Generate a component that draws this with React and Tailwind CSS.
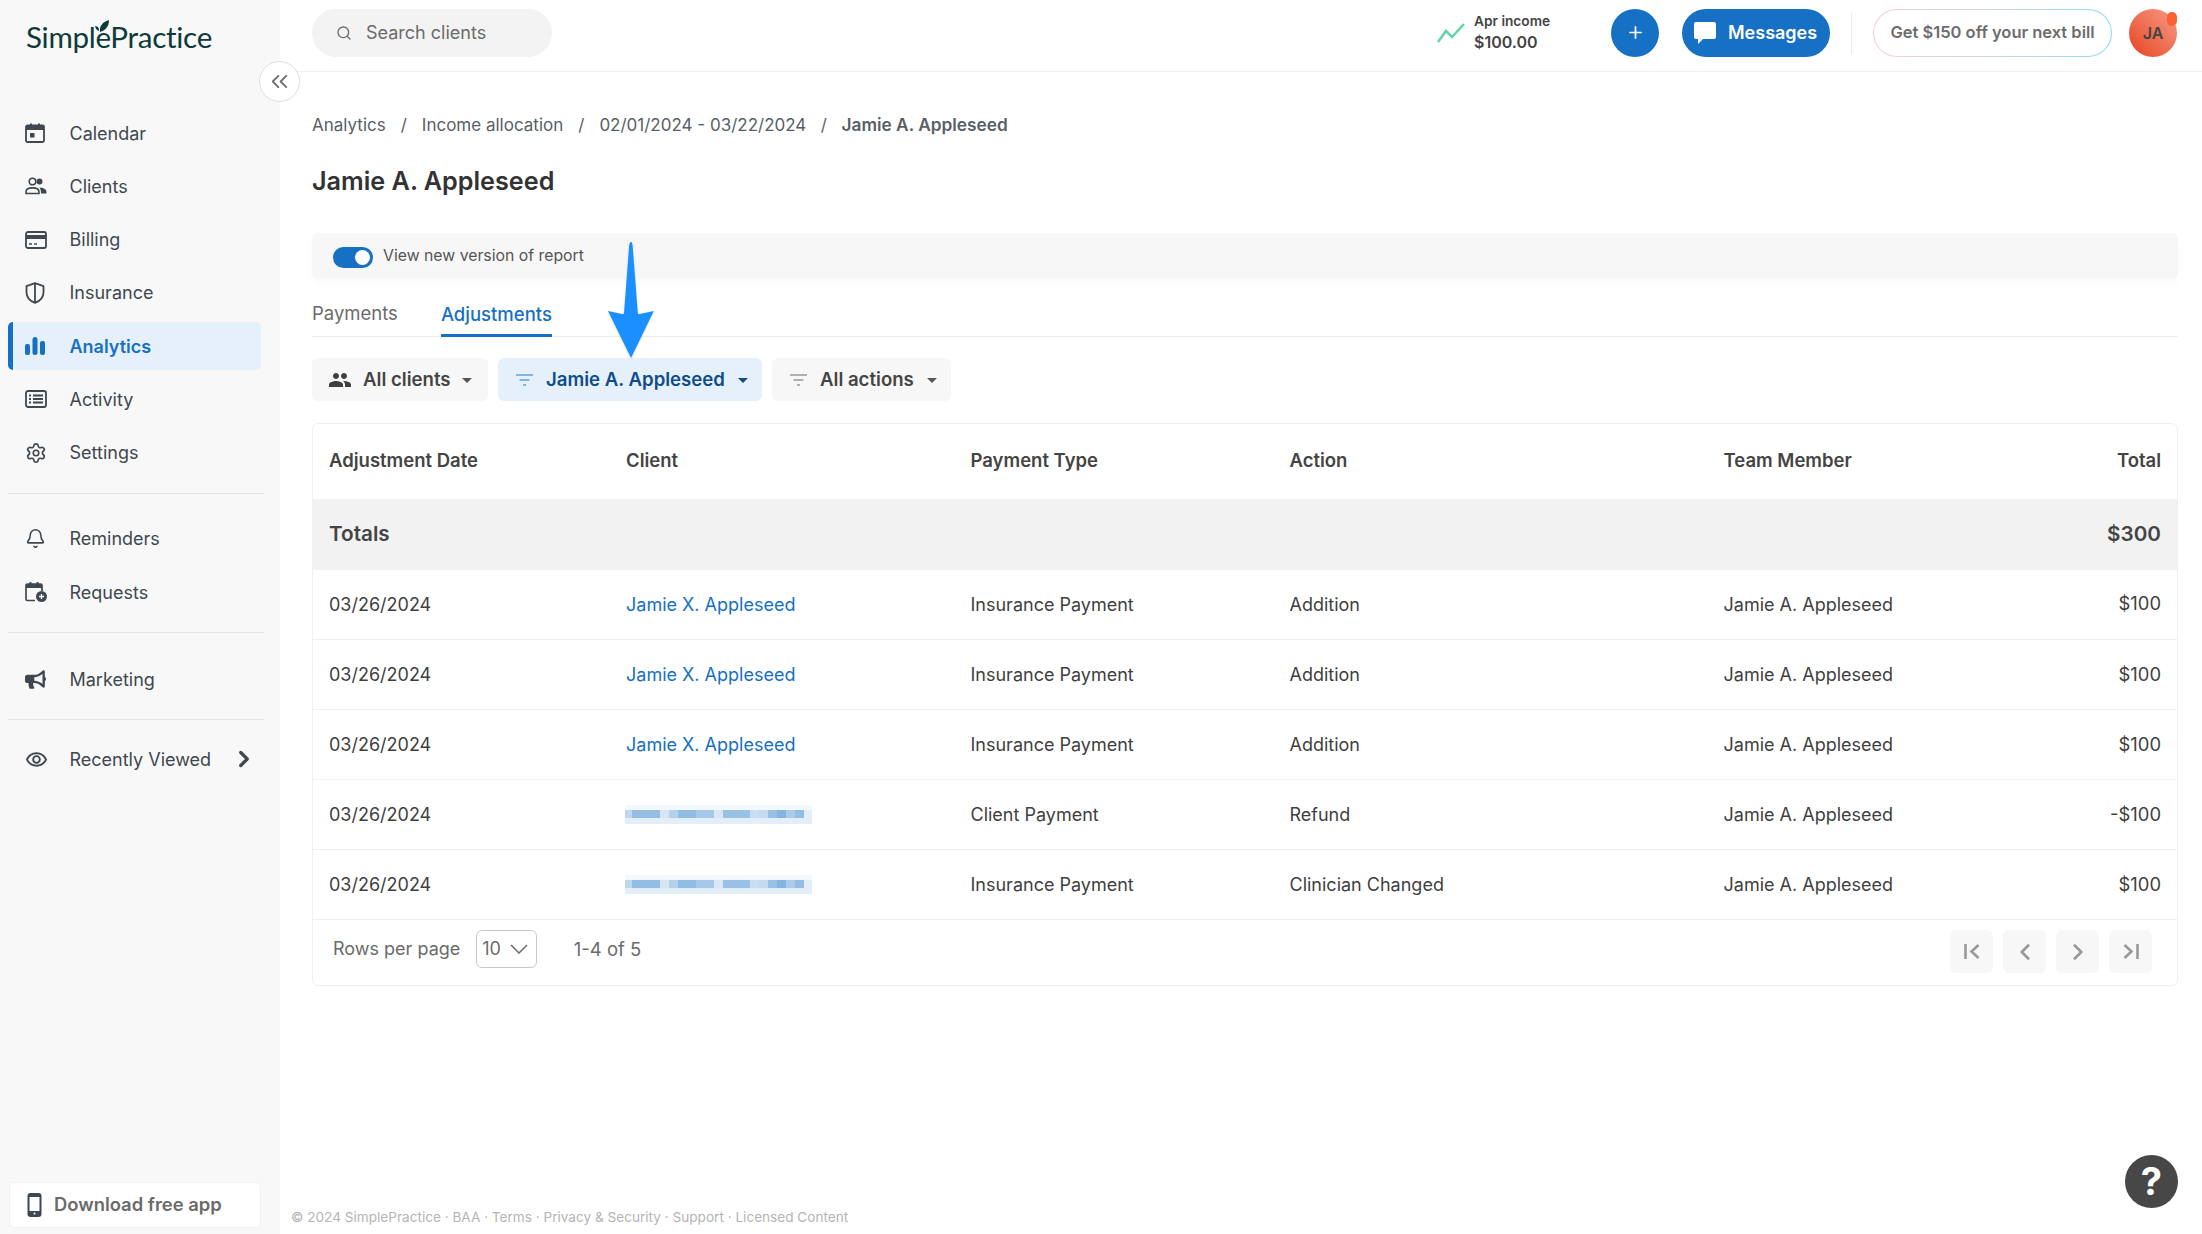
import { Bell, ChevronRight, ChevronLeft, ChevronsLeft, Plus, Search, Settings } from "lucide-react";
import { FaBullhorn } from "react-icons/fa";
import { MdOutlineRemoveRedEye, MdPeople } from "react-icons/md";

const CalendarIcon = () => (
  <svg viewBox="0 0 20 20" className="w-5 h-5" fill="none">
    <path d="M5 0.5h2v2.5H5zM13 0.5h2v2.5h-2z" fill="currentColor" />
    <rect x="1" y="2.5" width="18" height="16.5" rx="1.5" stroke="currentColor" strokeWidth="1.8" />
    <rect x="1" y="2.5" width="18" height="4.5" fill="currentColor" />
    <rect x="5" y="10" width="4.5" height="4.5" fill="currentColor" />
  </svg>
);

const ClientsIcon = () => (
  <svg viewBox="0 0 22 18" className="w-[22px] h-[18px]" fill="none">
    <circle cx="7.5" cy="4.5" r="3.3" stroke="currentColor" strokeWidth="1.6" />
    <path d="M1 16.5v-1.6c0-2.6 3-4 6.5-4s6.5 1.4 6.5 4v1.6z" stroke="currentColor" strokeWidth="1.6" />
    <circle cx="14.500" cy="4.500" r="3" fill="currentColor" />
    <path d="M14.500 10.500c3.500.2 7 1.500 7 4.400v1.600h-5.500c0-2.500-.3-4.400-1.500-6z" fill="currentColor" />
  </svg>
);

const BillingIcon = () => (
  <svg viewBox="0 0 22 18" className="w-[22px] h-[18px]" fill="none">
    <rect x="1" y="1" width="20" height="16" rx="2" stroke="currentColor" strokeWidth="1.8" />
    <rect x="1" y="4" width="20" height="4" fill="currentColor" />
    <path d="M4 13h3M9 13h3" stroke="currentColor" strokeWidth="1.600" />
  </svg>
);

const ShieldIcon = () => (
  <svg viewBox="0 0 20 22" className="w-5 h-[22px]" fill="none" stroke="currentColor" strokeWidth="1.800">
    <path d="M10 1.200 1.500 4.200v6c0 5 3.500 8.800 8.500 10.600 5-1.800 8.500-5.600 8.500-10.600v-6z" strokeLinejoin="round" />
    <path d="M10 1.500v19" />
  </svg>
);

const AnalyticsIcon = () => (
  <svg viewBox="0 0 20 18" className="w-5 h-[18px]" fill="currentColor">
    <rect x="0" y="7" width="5" height="11" rx="2" />
    <rect x="7.500" y="0" width="5" height="18" rx="2.500" />
    <rect x="15" y="4" width="5" height="14" rx="2" />
  </svg>
);

const ActivityIcon = () => (
  <svg viewBox="0 0 22 18" className="w-[22px] h-[18px]" fill="none" stroke="currentColor" strokeWidth="1.800">
    <rect x="1" y="1" width="20" height="16" rx="2" />
    <path d="M4 5.500h2M8 5.500h10M4 9h2M8 9h10M4 12.500h2M8 12.500h10" />
  </svg>
);

const RequestsIcon = () => (
  <svg viewBox="0 0 22 20" className="w-[22px] h-5" fill="none">
    <path d="M4.500 0h2v2.500h-2zM11.500 0h2v2.500h-2z" fill="currentColor" />
    <path d="M10 18.500H2.500A1.500 1.500 0 0 1 1 17V3.500A1.500 1.500 0 0 1 2.500 2h13A1.500 1.500 0 0 1 17 3.500V9" stroke="currentColor" strokeWidth="1.700" />
    <rect x="1" y="2" width="16" height="4" fill="currentColor" />
    <circle cx="16.500" cy="14.500" r="5.500" fill="currentColor" />
    <path d="M16.500 12v5M14 14.500h5" stroke="#f8f8f8" strokeWidth="1.300" />
  </svg>
);

const FilterIcon = ({ className }) => (
  <svg viewBox="0 0 17 12" className={`w-[17px] h-3 ${className}`} fill="none" stroke="currentColor" strokeWidth="1.500">
    <path d="M0 1h17M3.500 6h10M7 11h3" />
  </svg>
);

const Caret = ({ className }) => (
  <svg viewBox="0 0 10 5" className={`w-2.5 h-[5px] ${className}`} fill="currentColor">
    <path d="M0 0h10L5 5z" />
  </svg>
);

const PageFirst = () => (
  <svg viewBox="0 0 16 15" className="w-4 h-[15px]" fill="none" stroke="#999" strokeWidth="2.600">
    <path d="M1.500 0v15M14.500 1 7.500 7.500 14.500 14" />
  </svg>
);

const PageLast = () => (
  <svg viewBox="0 0 16 15" className="w-4 h-[15px]" fill="none" stroke="#999" strokeWidth="2.600">
    <path d="M14.500 0v15M1.500 1 8.500 7.500 1.500 14" />
  </svg>
);

// the blurred client names in the last two rows
const blurCells = [
  [0, 7, 0.28], [7, 28, 0.46], [35, 9, 0.18], [44, 9, 0.32], [53, 18, 0.47], [71, 18, 0.38],
  [89, 9, 0.16], [98, 27, 0.44], [125, 9, 0.24], [134, 9, 0.26], [143, 9, 0.44], [152, 9, 0.52],
  [161, 9, 0.36], [170, 9, 0.46], [179, 8, 0.12],
];

const BlurredName = () => (
  <svg viewBox="0 0 187 19" className="w-[187px] h-[19px] -ml-px">
    <rect x="0" y="0" width="187" height="5" fill="#1670c4" opacity="0.05" />
    <rect x="0" y="13" width="187" height="6" fill="#1670c4" opacity="0.12" />
    {blurCells.map(([x, w, o]) => (
      <rect key={x} x={x} y="5" width={w} height="8" fill="#1670c4" opacity={o} />
    ))}
  </svg>
);

const NavItem = ({ icon, label, active, children }) => (
  <a
    href="#"
    className={`relative flex items-center h-12 rounded-[5px] text-[18px] ${
      active ? "bg-[#e6f0fa] text-[#1670c4] font-semibold mr-[3px]" : "text-[#3f474f]"
    }`}
  >
    {active && <span className="absolute left-0 top-0 bottom-0 w-[5px] rounded-l-[5px] bg-[#1670c4]" />}
    <span className="w-[61.500px] pl-[17px] flex justify-start shrink-0">{icon}</span>
    {label}
    {children}
  </a>
);

const rows = [
  { client: "Jamie X. Appleseed", type: "Insurance Payment", action: "Addition", total: "$100" },
  { client: "Jamie X. Appleseed", type: "Insurance Payment", action: "Addition", total: "$100" },
  { client: "Jamie X. Appleseed", type: "Insurance Payment", action: "Addition", total: "$100" },
  { type: "Client Payment", action: "Refund", total: "-$100" },
  { type: "Insurance Payment", action: "Clinician Changed", total: "$100" },
];

const PageButton = ({ children, className = "" }) => (
  <button className={`w-[43px] h-[43px] rounded-[6px] bg-[#f7f7f7] text-[#999] flex items-center justify-center ${className}`}>
    {children}
  </button>
);

export default function App() {
  return (
    <div className="relative flex h-[1234px] overflow-hidden bg-white font-['Inter',sans-serif] text-[#3a3a3a]">
      {/* SIDEBAR */}
      <aside className="w-[280px] shrink-0 bg-[#f8f8f8] flex flex-col pl-2 pr-4 pb-[6px]">
        <div className="relative h-[109px] pl-[18px] pt-[17px]">
          <span className="font-['Lato',sans-serif] text-[29.600px] leading-[40px] tracking-[-0.3px] text-[#0e3a3a]">SimplePractice</span>
          <svg viewBox="0 0 14 12" className="absolute left-[87px] top-[20px] w-[14px] h-3" fill="#0e3a3a">
            <path d="M5 12C4 7 7 2 14 0c0 6-3 10-9 12zM3.500 11C1.500 10 .5 8 0 6c2 0 3.500 1 4 3z" />
          </svg>
        </div>
        <nav className="flex flex-col">
          <div className="flex flex-col gap-[5.300px]">
            <NavItem icon={<CalendarIcon />} label="Calendar" />
            <NavItem icon={<ClientsIcon />} label="Clients" />
            <NavItem icon={<BillingIcon />} label="Billing" />
            <NavItem icon={<ShieldIcon />} label="Insurance" />
            <NavItem icon={<span className="text-[#1670c4]"><AnalyticsIcon /></span>} label="Analytics" active />
            <NavItem icon={<ActivityIcon />} label="Activity" />
            <NavItem icon={<Settings className="w-[22px] h-[22px]" strokeWidth={1.8} />} label="Settings" />
          </div>
          <div className="mt-4 mb-[21px] h-px bg-[#e2e2e2]" />
          <div className="flex flex-col gap-[5.300px]">
            <NavItem icon={<Bell className="w-[21px] h-[21px]" strokeWidth={1.8} />} label="Reminders" />
            <NavItem icon={<RequestsIcon />} label="Requests" />
          </div>
          <div className="mt-4 mb-[22px] h-px bg-[#e2e2e2]" />
          <NavItem icon={<FaBullhorn className="w-[21px] h-[21px]" />} label="Marketing" />
          <div className="mt-4 mb-[15px] h-px bg-[#e2e2e2]" />
          <NavItem icon={<MdOutlineRemoveRedEye className="w-[23px] h-[23px]" />} label="Recently Viewed">
            <ChevronRight className="w-[26px] h-[26px] ml-auto mr-[7px]" strokeWidth={3} />
          </NavItem>
        </nav>
        <button className="mt-auto h-[46px] w-[252px] ml-px rounded-[5px] bg-white border border-[#f1f1f1] flex items-center pl-[17px] gap-[12px] text-[18.400px] font-semibold text-[#6b6b6b]">
          <svg viewBox="0 0 14 24" className="w-[15px] h-6" fill="none">
            <rect x="1" y="1" width="12" height="22" rx="2" stroke="#3f474f" strokeWidth="2" />
            <rect x="1" y="1" width="12" height="3" fill="#3f474f" />
            <rect x="1" y="18" width="12" height="5" fill="#3f474f" />
            <circle cx="7" cy="20.500" r="1" fill="#fff" />
          </svg>
          Download free app
        </button>
      </aside>

      {/* collapse button sits over the sidebar edge */}
      <button className="absolute left-[259px] top-[61px] w-[41px] h-[41px] rounded-full bg-white border border-[#dedede] flex items-center justify-center text-[#6d6d6d]">
        <ChevronsLeft className="w-[27px] h-[27px]" strokeWidth={1.6} />
      </button>

      <div className="flex-1 min-w-0 flex flex-col">
        {/* HEADER */}
        <header className="h-[72px] shrink-0 border-b border-[#f1f1f1] flex items-center pl-[32px] pr-[25px] pb-[6px]">
          <div className="w-[240px] h-[48px] rounded-full bg-[#f3f3f3] flex items-center pl-[24px] gap-[14px] text-[18px] text-[#6b6b6b]">
            <Search className="w-[16px] h-[16px]" strokeWidth={2} />
            Search clients
          </div>
          <div className="ml-auto flex items-center">
            <svg viewBox="0 0 28 20" className="w-[28px] h-5 mr-[9px]" fill="none" stroke="#64d3a6" strokeWidth="2.500">
              <path d="M1 19 9 8l6 6L27 1" />
            </svg>
            <div className="w-[137px] -mt-[2px] font-semibold text-[#444]">
              <div className="text-[13.700px] leading-[20px]">Apr income</div>
              <div className="text-[16px] leading-[22px]">$100.00</div>
            </div>
            <button className="w-12 h-12 rounded-full bg-[#1670c4] text-white flex items-center justify-center">
              <Plus className="w-[19px] h-[19px]" strokeWidth={2.200} />
            </button>
            <button className="ml-[23px] w-[148px] h-12 rounded-full bg-[#1670c4] text-white text-[18px] font-semibold flex items-center pl-[11px] gap-[11px]">
              <svg viewBox="0 0 24 24" className="w-[24px] h-[24px]" fill="#fff">
                <path d="M3 1h18a2 2 0 0 1 2 2v13a2 2 0 0 1-2 2H10l-5 5v-5H3a2 2 0 0 1-2-2V3a2 2 0 0 1 2-2z" />
              </svg>
              Messages
            </button>
            <div className="mx-[21px] w-px h-[42px] bg-[#ececec]" />
            <div className="w-[239px] h-12 rounded-full p-px bg-linear-to-r from-[#f9cfd0] to-[#8cdcf3]">
              <div className="w-full h-full rounded-full bg-white flex items-center justify-center text-[16.500px] font-semibold text-[#6d6d6d]">
                Get $150 off your next bill
              </div>
            </div>
            <div className="relative ml-[17px] w-12 h-12 rounded-full bg-linear-to-tr from-[#e63d17] to-[#f59a84] flex items-center justify-center text-[16px] font-semibold text-[#444]">
              JA
              <span className="absolute right-[0px] top-[3px] w-[10px] h-[14px] rounded-full bg-[#fa6232]" />
            </div>
          </div>
        </header>

        {/* MAIN */}
        <main className="relative flex-1 flex flex-col pl-[32px] pr-[24px]">
          <div className="pt-[42px] flex items-center text-[17px] leading-[22px] text-[#595f66]">
            <span>Analytics</span>
            <span className="mx-[15px]">/</span>
            <span>Income allocation</span>
            <span className="mx-[15px]">/</span>
            <span>02/01/2024 - 03/22/2024</span>
            <span className="mx-[14.500px]">/</span>
            <span className="font-semibold text-[17.300px]">Jamie A. Appleseed</span>
          </div>
          <h1 className="mt-[30px] text-[25.200px] leading-[30px] font-semibold text-[#333]">Jamie A. Appleseed</h1>

          <div className="mt-[36.500px] h-[46px] rounded-[6px] bg-[#f7f7f7] shadow-[0_6px_12px_rgba(0,0,0,0.02)] flex items-center pl-[21px] gap-[10px] text-[15.800px] text-[#555]">
            <span className="w-10 h-[21px] mt-[3px] rounded-full bg-[#1670c4] flex items-center justify-end pr-[3px]">
              <span className="w-[15px] h-[15px] rounded-full bg-white" />
            </span>
            <span>View new version of report</span>
          </div>

          {/* TABS */}
          <div className="h-[58px] border-b border-[#ececec] flex items-end gap-[43px] text-[18.500px] leading-[22px]">
            <span className="pb-[12px] text-[#6b6b6b]">Payments</span>
            <span className="pb-[9px] -mb-px border-b-[3px] border-[#1670c4] text-[#1670c4] font-medium">Adjustments</span>
          </div>

          {/* FILTERS */}
          <div className="mt-[21px] flex gap-[10px] text-[18.600px] font-semibold">
            <button className="w-[176px] h-[43px] pt-[2px] rounded-[6px] bg-[#f7f7f7] flex items-center pl-[16px] gap-[11px] text-[#444]">
              <MdPeople className="w-6 h-6 text-[#3f3f3f]" />
              All clients
              <Caret className="text-[#555]" />
            </button>
            <button className="w-[264px] h-[43px] pt-[2px] rounded-[6px] bg-[#e6f0fa] flex items-center pl-[18px] gap-[13px] text-[#0f4c8a]">
              <FilterIcon className="text-[#6a9fd2]" />
              Jamie A. Appleseed
              <Caret className="text-[#0f4c8a]" />
            </button>
            <button className="w-[179px] h-[43px] pt-[2px] rounded-[6px] bg-[#f7f7f7] flex items-center pl-[18px] gap-[13px] text-[#444]">
              <FilterIcon className="text-[#999]" />
              All actions
              <Caret className="text-[#555]" />
            </button>
          </div>

          {/* TABLE */}
          <div className="mt-[22px] border border-[#f0f0f0] rounded-[6px] overflow-hidden">
            <table className="w-full table-fixed text-[18px] text-[#3f3f3f]">
              <thead>
                <tr className="h-[75px] text-left text-[18.500px] text-[#444] shadow-[0_3px_6px_rgba(0,0,0,0.03)]">
                  <th className="w-[313px] pl-4 font-semibold">Adjustment Date</th>
                  <th className="w-[344.500px] font-semibold">Client</th>
                  <th className="w-[319px] font-semibold">Payment Type</th>
                  <th className="w-[434px] font-semibold">Action</th>
                  <th className="font-semibold">Team Member</th>
                  <th className="w-[120px] pr-4 text-right font-semibold">Total</th>
                </tr>
              </thead>
              <tbody>
                <tr className="h-[71px] bg-[#f2f2f2] text-[20.700px] font-semibold text-[#444]">
                  <td className="pl-4">Totals</td>
                  <td colSpan={4} />
                  <td className="pr-4 text-right">$300</td>
                </tr>
                {rows.map((row, i) => (
                  <tr key={i} className="h-[70px] border-b border-[#f0f0f0]">
                    <td className="pl-4">03/26/2024</td>
                    <td>
                      {row.client ? <a href="#" className="text-[#1670c4]">{row.client}</a> : <BlurredName />}
                    </td>
                    <td>{row.type}</td>
                    <td>{row.action}</td>
                    <td>Jamie A. Appleseed</td>
                    <td className="pr-4 text-right text-[18.400px]">{row.total}</td>
                  </tr>
                ))}
              </tbody>
            </table>
            <div className="h-[65px] flex items-start pt-[10px] pl-[20px] pr-[25px] text-[18px] leading-[38px] text-[#6b6b6b]">
              <span>Rows per page</span>
              <div className="ml-[16px] w-[61px] h-[38px] rounded-[6px] border border-[#c8c8c8] flex items-center pl-[5px] gap-[9px]">
                10
                <svg viewBox="0 0 18 10" className="w-[18px] h-[10px]" fill="none" stroke="#6b6b6b" strokeWidth="1.500">
                  <path d="M1 1l8 8 8-8" />
                </svg>
              </div>
              <span className="ml-[36.500px] text-[18.500px]">1-4 of 5</span>
              <div className="ml-auto flex gap-[10px]">
                <PageButton><PageFirst /></PageButton>
                <PageButton><ChevronLeft className="w-[26px] h-[26px]" strokeWidth={2.500} /></PageButton>
                <PageButton><ChevronRight className="w-[26px] h-[26px]" strokeWidth={2.500} /></PageButton>
                <PageButton><PageLast /></PageButton>
              </div>
            </div>
          </div>

          {/* FOOTER */}
          <footer className="mt-auto -ml-[21px] mb-[9px] text-[13.600px] leading-[16px] text-[#b5b5b5]">
            © 2024 SimplePractice · BAA · Terms · Privacy &amp; Security · Support · Licensed Content
          </footer>

          <button className="absolute right-[24px] bottom-[26px] w-[53px] h-[53px] rounded-full bg-[#474747] text-white text-[38px] font-bold flex items-center justify-center">
            ?
          </button>
        </main>
      </div>

      {/* annotation arrow over the filters */}
      <svg viewBox="0 0 46 116" className="absolute left-[608px] top-[242px] w-[46px] h-[116px] drop-shadow-[0_1px_1px_rgba(0,0,0,0.15)]" fill="#1a8fff">
        <path d="M23 0c.800 0 1.500 1 1.800 6l5 65c.300 1 .800 1.500 2 1l14-3L23 116 0 69l14 3c1.200.500 1.800 0 2-1l5-65c.300-5 1.200-6 2-6z" />
      </svg>
    </div>
  );
}
